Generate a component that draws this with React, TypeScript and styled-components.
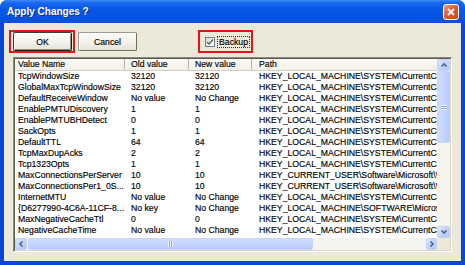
import React from "react";
import { styled, createGlobalStyle } from "styled-components";

const GlobalStyle = createGlobalStyle`
  html, body {
    margin: 0;
    padding: 0;
    background: #ffffff;
  }
  body {
    font-family: "Liberation Sans", Arial, sans-serif;
  }
`;

const Window = styled.div`
  width: 465px;
  height: 265px;
  display: flex;
  flex-direction: column;
  background: #0a47d8;
  border-radius: 7px 7px 0 0;
  overflow: hidden;
`;

const TitleBar = styled.div`
  height: 23px;
  flex: none;
  display: flex;
  align-items: center;
  justify-content: space-between;
  padding: 0 6px 0 7px;
  background: linear-gradient(
    #3d8af7 0%,
    #1a68ee 12%,
    #0757e6 40%,
    #0554e3 70%,
    #0a4fdc 100%
  );
`;

const Title = styled.span`
  color: #ffffff;
  font: bold 10px "Liberation Sans", Arial, sans-serif;
  text-shadow: 1px 1px 0 #0c2f9c;
`;

const CloseButton = styled.div`
  width: 16px;
  height: 16px;
  box-sizing: border-box;
  border: 1px solid #ffffff;
  border-radius: 3px;
  background: linear-gradient(135deg, #f09a7e 0%, #e15a35 45%, #c9401d 100%);
  display: flex;
  align-items: center;
  justify-content: center;
`;

const Client = styled.div`
  flex: 1;
  margin: 0 4px 4px;
  background: #ece9d8;
  display: flex;
  flex-direction: column;
  padding: 7px 9px 0 5px;
`;

const Toolbar = styled.div`
  display: flex;
  align-items: flex-start;
  height: 23px;
`;

const Highlight = styled.div<{ $pad: string; $ml?: number }>`
  box-sizing: border-box;
  height: 23px;
  border: 2px solid #e5131c;
  display: flex;
  align-items: center;
  padding: ${(p) => p.$pad};
  margin-left: ${(p) => p.$ml ?? 0}px;
`;

const Button = styled.div<{ $default?: boolean }>`
  box-sizing: border-box;
  width: 59px;
  height: 19px;
  display: flex;
  align-items: center;
  justify-content: center;
  font-size: 8.7px;
  color: #000000;
  -webkit-text-stroke: 0.15px #000000;
  border-radius: 2px;
  background: linear-gradient(#fbfbf7 0%, #f2f1ea 60%, #e4e2d6 100%);
  border: 1px solid ${(p) => (p.$default ? "#3a3a3a" : "#9d9b8e")};
  border-right-color: ${(p) => (p.$default ? "#1e1e1e" : "#6f6d62")};
  border-bottom-color: ${(p) => (p.$default ? "#1e1e1e" : "#6f6d62")};
  box-shadow: ${(p) =>
    p.$default ? "inset 1px 1px 0 #ffffff, inset -1px -1px 0 #8d8b80" : "inset 1px 1px 0 #ffffff"};
`;

const CancelButton = styled(Button)`
  margin: 2px 0 0 3px;
`;

const CheckBox = styled.div`
  box-sizing: border-box;
  width: 10px;
  height: 10px;
  border: 1px solid #6d7f92;
  background: linear-gradient(135deg, #dcdcd6 0%, #f4f4f0 70%, #ffffff 100%);
  display: flex;
  align-items: center;
  justify-content: center;
`;

const CheckLabel = styled.span`
  margin-left: 3px;
  padding: 0 1px;
  font-size: 8.7px;
  line-height: 10px;
  color: #000000;
  -webkit-text-stroke: 0.15px #000000;
  outline: 1px dotted #333333;
  outline-offset: 0;
`;

const ListView = styled.div`
  box-sizing: border-box;
  margin: 4px 0 0 4px;
  height: 195px;
  border: 1px solid #8c8a80;
  border-right-color: #ffffff;
  border-bottom-color: #ffffff;
  box-shadow: inset 1px 1px 0 #5a5850, inset -1px -1px 0 #dcd9cc;
  padding: 1px;
  display: grid;
  grid-template-columns: 1fr 13px;
  grid-template-rows: 1fr 12px;
  background: #ffffff;
`;

const Content = styled.div`
  overflow: hidden;
  background: #ffffff;
`;

const HeaderRow = styled.div`
  display: flex;
  height: 12px;
  background: linear-gradient(#fbfaf6 0%, #f1efe6 100%);
  border-bottom: 1px solid #d4d0c0;
  box-sizing: border-box;
`;

const Row = styled.div`
  display: flex;
  height: 11px;
`;

const Cell = styled.div<{ $w?: number; $pl: number; $head?: boolean }>`
  box-sizing: border-box;
  flex: ${(p) => (p.$w ? `0 0 ${p.$w}px` : "1 0 auto")};
  width: ${(p) => (p.$w ? `${p.$w}px` : "auto")};
  padding-left: ${(p) => p.$pl}px;
  font-size: 8.7px;
  line-height: 11px;
  color: #000000;
  -webkit-text-stroke: 0.15px #000000;
  white-space: nowrap;
  overflow: hidden;
  border-right: ${(p) => (p.$head ? "1px solid #b7b4a4" : "none")};
`;

const VScroll = styled.div`
  display: flex;
  flex-direction: column;
  background: #f4f3ee;
`;

const HScroll = styled.div`
  display: flex;
  background: #f4f3ee;
`;

const Corner = styled.div`
  background: #ece9d8;
`;

const ArrowButton = styled.div<{ $w: number; $h: number }>`
  box-sizing: border-box;
  flex: none;
  width: ${(p) => p.$w}px;
  height: ${(p) => p.$h}px;
  border: 1px solid #c4d2f4;
  border-radius: 2px;
  background: linear-gradient(135deg, #dbe6fd 0%, #bfd1fa 60%, #b1c6f6 100%);
  display: flex;
  align-items: center;
  justify-content: center;
`;

const Thumb = styled.div<{ $vertical?: boolean; $size: number; $gap?: number }>`
  box-sizing: border-box;
  flex: none;
  ${(p) =>
    p.$vertical
      ? `height: ${p.$size}px; width: 100%; margin-top: ${p.$gap ?? 0}px;`
      : `width: ${p.$size}px; height: 100%; margin-left: ${p.$gap ?? 0}px;`}
  border: 1px solid #c7d5f7;
  border-radius: 2px;
  background: ${(p) =>
    p.$vertical
      ? "linear-gradient(90deg, #cfdcfd 0%, #c3d4fc 60%, #b6c9f8 100%)"
      : "linear-gradient(#cfdcfd 0%, #c3d4fc 60%, #b6c9f8 100%)"};
  display: flex;
  align-items: center;
  justify-content: center;
`;

const Track = styled.div`
  flex: 1;
`;

const Grip = styled.div<{ $vertical?: boolean }>`
  width: ${(p) => (p.$vertical ? 6 : 5)}px;
  height: ${(p) => (p.$vertical ? 5 : 6)}px;
  background: ${(p) =>
    p.$vertical
      ? "repeating-linear-gradient(#eef3ff 0 1px, #8da6d8 1px 2px)"
      : "repeating-linear-gradient(90deg, #eef3ff 0 1px, #8da6d8 1px 2px)"};
`;

const Chevron = ({ dir }: { dir: "up" | "down" | "left" | "right" }) => {
  const pts = {
    up: "1.5,5.5 4,3 6.5,5.5",
    down: "1.5,2.5 4,5 6.5,2.5",
    left: "5.5,1.5 3,4 5.5,6.5",
    right: "2.5,1.5 5,4 2.5,6.5",
  }[dir];
  return (
    <svg width="8" height="8" viewBox="0 0 8 8">
      <polyline points={pts} fill="none" stroke="#4d6185" strokeWidth="1.6" />
    </svg>
  );
};

const HKLM = "HKEY_LOCAL_MACHINE\\SYSTEM\\CurrentControlSet\\Services\\Tcpip\\Parameters";
const HKCU = "HKEY_CURRENT_USER\\Software\\Microsoft\\Windows\\CurrentVersion\\Internet Settings";

const rows: [string, string, string, string][] = [
  ["TcpWindowSize", "32120", "32120", HKLM],
  ["GlobalMaxTcpWindowSize", "32120", "32120", HKLM],
  ["DefaultReceiveWindow", "No value", "No Change", HKLM],
  ["EnablePMTUDiscovery", "1", "1", HKLM],
  ["EnablePMTUBHDetect", "0", "0", HKLM],
  ["SackOpts", "1", "1", HKLM],
  ["DefaultTTL", "64", "64", HKLM],
  ["TcpMaxDupAcks", "2", "2", HKLM],
  ["Tcp1323Opts", "1", "1", HKLM],
  ["MaxConnectionsPerServer", "10", "10", HKCU],
  ["MaxConnectionsPer1_0S...", "10", "10", HKCU],
  ["InternetMTU", "No value", "No Change", HKLM],
  ["{D6277990-4C6A-11CF-8...", "No key", "No Change", "HKEY_LOCAL_MACHINE\\SOFTWARE\\Microsoft\\Windows\\CurrentVersion"],
  ["MaxNegativeCacheTtl", "0", "0", "HKEY_LOCAL_MACHINE\\SYSTEM\\CurrentControlSet\\Services\\Dnscache\\Parameters"],
  ["NegativeCacheTime", "No value", "No Change", "HKEY_LOCAL_MACHINE\\SYSTEM\\CurrentControlSet\\Services\\Dnscache\\Parameters"],
];

const cols = [
  { w: 110, pl: 3 },
  { w: 64, pl: 6 },
  { w: 63, pl: 6 },
  { w: 0, pl: 7 },
];

const App = () => {
  return (
    <>
      <GlobalStyle />
      <Window>
        <TitleBar>
          <Title>Apply Changes ?</Title>
          <CloseButton>
            <svg width="10" height="10" viewBox="0 0 10 10">
              <path d="M2 2 L8 8 M8 2 L2 8" stroke="#ffffff" strokeWidth="1.8" />
            </svg>
          </CloseButton>
        </TitleBar>
        <Client>
          <Toolbar>
            <Highlight $pad="0 1px 0 2px">
              <Button $default>OK</Button>
            </Highlight>
            <CancelButton>Cancel</CancelButton>
            <Highlight $pad="0 2px 0 5px" $ml={61}>
              <CheckBox>
                <svg width="8" height="8" viewBox="0 0 8 8">
                  <polyline points="1,4 3,6 7,1.5" fill="none" stroke="#5b6e5b" strokeWidth="1.5" />
                </svg>
              </CheckBox>
              <CheckLabel>Backup</CheckLabel>
            </Highlight>
          </Toolbar>
          <ListView>
            <Content>
              <HeaderRow>
                {["Value Name", "Old value", "New value", "Path"].map((h, i) => (
                  <Cell key={h} $w={cols[i].w || undefined} $pl={cols[i].pl} $head={i < 3}>
                    {h}
                  </Cell>
                ))}
              </HeaderRow>
              {rows.map((r, ri) => (
                <Row key={ri}>
                  {r.map((v, i) => (
                    <Cell key={i} $w={cols[i].w || undefined} $pl={cols[i].pl}>
                      {v}
                    </Cell>
                  ))}
                </Row>
              ))}
            </Content>
            <VScroll>
              <ArrowButton $w={13} $h={12}>
                <Chevron dir="up" />
              </ArrowButton>
              <Thumb $vertical $size={72}>
                <Grip $vertical />
              </Thumb>
              <Track />
              <ArrowButton $w={13} $h={12}>
                <Chevron dir="down" />
              </ArrowButton>
            </VScroll>
            <HScroll>
              <ArrowButton $w={12} $h={12}>
                <Chevron dir="left" />
              </ArrowButton>
              <Thumb $size={285} $gap={1}>
                <Grip />
              </Thumb>
              <Track />
              <ArrowButton $w={11} $h={12}>
                <Chevron dir="right" />
              </ArrowButton>
            </HScroll>
            <Corner />
          </ListView>
        </Client>
      </Window>
    </>
  );
};

export default App;
